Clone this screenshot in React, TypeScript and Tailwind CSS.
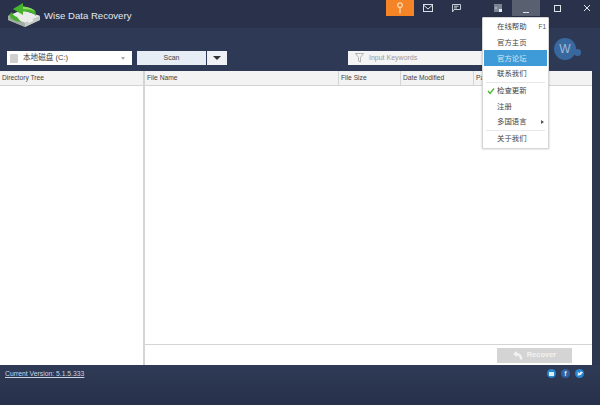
import React from "react";

const F = "[font-family:'Liberation_Sans','Noto_Sans_CJK_SC',sans-serif]";

function Logo() {
  return (
    <svg width="34" height="26" viewBox="0 0 34 26" className="shrink-0">
      <path d="M0 13 L14 7 L32 13 V17 L17 24 L0 17 Z" fill="#8b938f" />
      <path d="M0 13 L14 7 L32 13 L17 20 Z" fill="#e9ecea" />
      <path d="M17 20 L32 13 V17 L17 24 Z" fill="#c7ccc9" />
      <path d="M0 13 L17 20 V24 L0 17 Z" fill="#a5aca8" />
      <rect x="20" y="17.5" width="5" height="1.6" transform="rotate(-24 22 18)" fill="#f4f6f4" />
      <path d="M1 12 Q3 18 13 19 L9 14 Q5 13 4 9 Z" fill="#49ad2f" />
      <path d="M15 0 L5 6 L15 12 V8.5 Q24 8 28 13 Q29 5 15 3.5 Z" fill="#46b52c" />
      <path d="M15 3.5 Q25 4.5 28 9 Q24 6 15 6 Z" fill="#8fdc63" />
    </svg>
  );
}

function MenuItem({ label, right, check, active }: { label: string; right?: React.ReactNode; check?: boolean; active?: boolean }) {
  return (
    <div className={`relative mx-px flex h-[15.7px] items-center justify-between pr-[1px] pl-[13px] text-[7.4px] ${active ? "bg-[#3f9bd8] text-[#d5e6f2]" : "text-[#444]"}`}>
      <span>{label}</span>
      {right}
      {check && (
        <svg width="8" height="8" viewBox="0 0 8 8" className="absolute left-[3px]">
          <path d="M1 4 L3 6.5 L7 1.5" fill="none" stroke="#45b82c" strokeWidth="1.3" />
        </svg>
      )}
    </div>
  );
}

function Head({ label, className }: { label: string; className: string }) {
  return <div className={`flex h-full items-center border-r border-[#d4d4d4] pl-[2px] text-[6.7px] text-[#444] ${className}`}>{label}</div>;
}

export default function App() {
  return (
    <div className={`relative flex h-[405px] w-[600px] flex-col overflow-hidden bg-[#2d3850] ${F}`}>
      {/* title bar */}
      <div className="flex h-[28px] items-start bg-[#29324a]">
        <div className="mt-[3px] ml-[8px] flex items-start">
          <Logo />
          <span className="mt-[6px] ml-[2px] text-[9.6px] leading-[14px] text-[#e4e8ee]">Wise Data Recovery</span>
        </div>
        <div className="ml-auto flex h-[16px] items-center">
          <div className="flex h-[16px] w-[28px] items-center justify-center bg-[#f58426]">
            <svg width="8" height="12" viewBox="0 0 8 12" fill="none" stroke="#fbd6ae" strokeWidth="1.3">
              <circle cx="4" cy="3.2" r="2.3" />
              <path d="M4 6 V11.5" />
            </svg>
          </div>
          <div className="flex w-[28px] items-center justify-center">
            <svg width="10" height="8" viewBox="0 0 10 8" fill="none" stroke="#d9dee6" strokeWidth="1">
              <rect x="0.5" y="0.5" width="9" height="7" />
              <path d="M1 1.5 L5 5 L9 1.5" />
            </svg>
          </div>
          <div className="flex w-[28px] items-center justify-center">
            <svg width="10" height="9" viewBox="0 0 10 9" fill="none" stroke="#c6ccd6" strokeWidth="1">
              <path d="M1.5 0.5 H9.5 V5.5 H3 L1.5 8 Z M3 2.2 H7.5 M3 3.9 H6" />
            </svg>
          </div>
          <div className="flex w-[14px]" />
          <div className="flex w-[28px] items-center justify-center">
            <svg width="8" height="8" viewBox="0 0 8 8">
              <rect x="0" y="0" width="8" height="8" fill="#7c8492" />
              <rect x="1" y="3.5" width="2" height="1" fill="#d8dce2" />
              <rect x="5" y="5" width="3" height="3" fill="#e6e9ed" />
            </svg>
          </div>
          <div className="flex h-[16px] w-[28px] items-end justify-center bg-[#59606f] pb-[3px]">
            <div className="h-px w-[6px] bg-[#dfe3e8]" />
          </div>
          <div className="flex w-[34px] items-center justify-center">
            <div className="size-[7px] border border-[#dfe3e8]" />
          </div>
          <div className="flex w-[26px] items-center justify-center">
            <svg width="8" height="8" viewBox="0 0 8 8" stroke="#e4e7eb" strokeWidth="1">
              <path d="M1 1 L7 7 M7 1 L1 7" />
            </svg>
          </div>
        </div>
      </div>

      {/* toolbar */}
      <div className="flex h-[43px] items-start bg-[#2e3a55] pt-[23px] pl-[7px]">
        <div className="flex h-[14px] w-[125px] items-center bg-white pr-[7px] pl-[3px] text-[7.6px] text-[#444]">
          <div className="mr-[5px] h-[9px] w-[8px] rounded-[1px] bg-[#cfcfcf]" />
          <span>本地磁盘 (C:)</span>
          <div className="ml-auto h-0 w-0 border-x-[2px] border-t-[3px] border-x-transparent border-t-[#aaa]" />
        </div>
        <div className="ml-[5px] flex h-[14px] w-[69px] items-center justify-center bg-[#e6edf5] text-[7px] text-[#444]">Scan</div>
        <div className="ml-px flex h-[14px] w-[20px] items-center justify-center bg-[#eef1f5]">
          <div className="h-0 w-0 border-x-[4px] border-t-[4px] border-x-transparent border-t-[#333]" />
        </div>
        <div className="ml-[121px] flex h-[14px] w-[142px] items-center bg-[#f4f4f4] pl-[7px] text-[7px] text-[#9a9a9a]">
          <svg width="9" height="10" viewBox="0 0 9 10" fill="none" stroke="#999" strokeWidth="0.7" className="mr-[5px]">
            <path d="M0.5 0.5 H8.5 L5.5 4.5 V9 L3.5 8 V4.5 Z" />
          </svg>
          Input Keywords
        </div>
        <div className="relative mt-[-13px] ml-[64px] flex size-[22px] items-center justify-center rounded-full bg-[#39689f] text-[12px] text-[#9fbad8]">
          W
          <div className="absolute right-[-5px] bottom-[4px] size-[7px] rounded-full bg-[#39689f]" />
        </div>
      </div>

      {/* main panel */}
      <div className="mr-[8px] flex h-[294px] flex-col bg-white">
        <div className="flex h-[15px] border-b border-[#d4d4d4] bg-[#f3f3f3]">
          <Head label="Directory Tree" className="w-[145px] border-r-2" />
          <Head label="File Name" className="w-[194px]" />
          <Head label="File Size" className="w-[62px]" />
          <Head label="Date Modified" className="w-[73px]" />
          <Head label="Path" className="flex-1 border-r-0" />
        </div>
        <div className="flex min-h-0 flex-1">
          <div className="w-[145px] border-r-2 border-[#d4d4d4]" />
          <div className="flex flex-1 flex-col">
            <div className="flex-1" />
            <div className="flex h-[21px] items-center justify-end border-t border-[#d4d4d4] pr-[20px]">
              <div className="flex h-[15px] w-[75px] items-center justify-center gap-[4px] bg-[#d4d4d4] text-[7.5px] font-bold text-[#f2f2f2]">
                <svg width="10" height="9" viewBox="0 0 10 9" fill="#f2f2f2">
                  <path d="M0 3 L4 0 V2 Q9 2 9.5 8.5 H7 Q7 4.5 4 4.5 V6 Z" />
                </svg>
                Recover
              </div>
            </div>
          </div>
        </div>
      </div>

      {/* footer */}
      <div className="flex h-[40px] items-start justify-between bg-gradient-to-b from-[#2f3b56] to-[#27304a] pt-[4px] pr-[16px] pl-[5px]">
        <span className="text-[6.8px] leading-[10px] text-[#c9d3e2] underline">Current Version: 5.1.5.333</span>
        <div className="flex gap-[5px]">
          <div className="flex size-[9px] items-center justify-center rounded-full bg-[#2a85d0]">
            <div className="h-[4px] w-[5px] bg-[#dcecf8]" />
          </div>
          <div className="flex size-[9px] items-center justify-center rounded-full bg-[#33619f] text-[7px] leading-none font-bold text-[#dbe6f3]">f</div>
          <div className="flex size-[9px] items-center justify-center rounded-full bg-[#2a85d0]">
            <svg width="6" height="5" viewBox="0 0 6 5" fill="#e4f1fa">
              <path d="M0 4 Q3 5.5 5 2.5 L6 1 L5 1 Q4 0 3 1 V2 Q1.5 2 0.5 0.8 Q0.3 2 1.2 2.8 Q1 3.6 0 4 Z" />
            </svg>
          </div>
        </div>
      </div>

      {/* dropdown menu */}
      <div className="absolute top-[17px] left-[482px] w-[67px] rounded-[1px] border border-[#d6d6d6] bg-white pt-[1px] pb-[1px] shadow-[0_0_2px_rgba(0,0,0,0.3)]">
        <MenuItem label="在线帮助" right={<span className="text-[6.5px] text-[#555]">F1</span>} />
        <MenuItem label="官方主页" />
        <MenuItem label="官方论坛" active />
        <MenuItem label="联系我们" />
        <div className="mx-[3px] h-px bg-[#e8e8e8]" />
        <MenuItem label="检查更新" check />
        <MenuItem label="注册" />
        <MenuItem label="多国语言" right={<div className="mr-[2px] h-0 w-0 border-y-[2.5px] border-l-[3px] border-y-transparent border-l-[#555]" />} />
        <div className="mx-[3px] h-px bg-[#e8e8e8]" />
        <MenuItem label="关于我们" />
      </div>
    </div>
  );
}
